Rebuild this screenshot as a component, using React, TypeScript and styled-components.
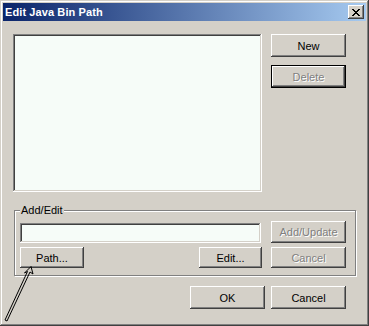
import React from "react";
import styled, { createGlobalStyle, css } from "styled-components";

const Global = createGlobalStyle`
  html, body { margin: 0; padding: 0; background: #d4d0c8; }
  body { font-family: "Liberation Sans", Arial, sans-serif; font-size: 11px; }
`;

const Window = styled.div`
  position: relative;
  box-sizing: border-box;
  width: 369px;
  height: 326px;
  background: #d4d0c8;
  padding: 3px;
  box-shadow: inset -1px -1px #404040, inset 1px 1px #d4d0c8,
    inset -2px -2px #808080, inset 2px 2px #ffffff;
  display: flex;
  flex-direction: column;
`;

const TitleBar = styled.div`
  height: 18px;
  display: flex;
  align-items: center;
  justify-content: space-between;
  padding-left: 2px;
  background: linear-gradient(to right, #0a246a, #a6caf0);
`;

const Title = styled.span`
  color: #ffffff;
  font-weight: bold;
  font-size: 11px;
  font-family: "Liberation Sans", Arial, sans-serif;
  letter-spacing: 0.1px;
`;

const bevel = css`
  box-shadow: inset -1px -1px #404040, inset 1px 1px #ffffff,
    inset -2px -2px #808080, inset 2px 2px #d4d0c8;
`;

const CloseButton = styled.div`
  width: 16px;
  height: 14px;
  margin-right: 2px;
  background: #d4d0c8;
  ${bevel};
  display: flex;
  align-items: center;
  justify-content: center;
`;

const Body = styled.div`
  flex: 1;
  display: flex;
  flex-direction: column;
  padding: 13px 0 0 10px;
`;

const TopRow = styled.div`
  display: flex;
  gap: 9px;
`;

const sunken = css`
  box-shadow: inset -1px -1px #ffffff, inset 1px 1px #808080,
    inset -2px -2px #d4d0c8, inset 2px 2px #404040;
`;

const ListBox = styled.div`
  width: 249px;
  height: 158px;
  background: #f6fcf8;
  ${sunken};
`;

const ButtonColumn = styled.div`
  display: flex;
  flex-direction: column;
  gap: 8px;
`;

const Button = styled.div<{ $w: number; $h: number; $disabled?: boolean; $default?: boolean }>`
  box-sizing: border-box;
  width: ${(p) => p.$w}px;
  height: ${(p) => p.$h}px;
  display: flex;
  align-items: center;
  justify-content: center;
  background: #d4d0c8;
  font-size: 11px;
  color: ${(p) => (p.$disabled ? "#808080" : "#000000")};
  text-shadow: ${(p) => (p.$disabled ? "1px 1px 0 #ffffff" : "none")};
  ${(p) =>
    p.$default
      ? css`
          box-shadow: inset 0 0 0 1px #000000, inset -2px -2px #404040,
            inset 2px 2px #ffffff, inset -3px -3px #808080,
            inset 3px 3px #d4d0c8;
        `
      : bevel};
`;

const Group = styled.div`
  position: relative;
  box-sizing: border-box;
  width: 342px;
  margin: 18px 0 0 1px;
  border: 1px solid #808080;
  box-shadow: inset 1px 1px #ffffff, 1px 1px #ffffff;
  padding: 10px 9px 7px 5px;
  display: flex;
  flex-direction: column;
  gap: 4px;
`;

const GroupLabel = styled.span`
  position: absolute;
  top: -8px;
  left: 5px;
  padding: 0 1px;
  background: #d4d0c8;
  line-height: 14px;
`;

const GroupRow = styled.div`
  display: flex;
  align-items: flex-start;
`;

const TextInput = styled.div`
  width: 241px;
  height: 20px;
  margin: 2px 10px 0 0;
  background: #f6fcf8;
  ${sunken};
`;

const Spacer = styled.div`
  flex: 1;
`;

const Footer = styled.div`
  display: flex;
  justify-content: flex-end;
  gap: 6px;
  margin: 10px 20px 0 0;
`;

const ArrowLayer = styled.svg`
  position: absolute;
  left: 0;
  top: 260px;
`;

const CloseGlyph = () => (
  <svg width="8" height="7" viewBox="0 0 8 7" shapeRendering="crispEdges">
    {[
      [0, 0], [1, 0], [6, 0], [7, 0],
      [1, 1], [2, 1], [5, 1], [6, 1],
      [2, 2], [3, 2], [4, 2], [5, 2],
      [3, 3], [4, 3],
      [2, 4], [3, 4], [4, 4], [5, 4],
      [1, 5], [2, 5], [5, 5], [6, 5],
      [0, 6], [1, 6], [6, 6], [7, 6],
    ].map(([x, y]) => (
      <rect key={`${x}-${y}`} x={x} y={y} width="1" height="1" fill="#000" />
    ))}
  </svg>
);

export default function App() {
  return (
    <>
      <Global />
      <Window>
        <TitleBar>
          <Title>Edit Java Bin Path</Title>
          <CloseButton>
            <CloseGlyph />
          </CloseButton>
        </TitleBar>
        <Body>
          <TopRow>
            <ListBox />
            <ButtonColumn>
              <Button $w={75} $h={23}>New</Button>
              <Button $w={75} $h={23} $disabled $default>Delete</Button>
            </ButtonColumn>
          </TopRow>
          <Group>
            <GroupLabel>Add/Edit</GroupLabel>
            <GroupRow>
              <TextInput />
              <Button $w={75} $h={22} $disabled>Add/Update</Button>
            </GroupRow>
            <GroupRow>
              <Button $w={64} $h={21}>Path...</Button>
              <Spacer />
              <Button $w={63} $h={21}>Edit...</Button>
              <Button $w={75} $h={21} $disabled style={{ marginLeft: 9 }}>Cancel</Button>
            </GroupRow>
          </Group>
          <Footer>
            <Button $w={75} $h={23}>OK</Button>
            <Button $w={75} $h={23}>Cancel</Button>
          </Footer>
        </Body>
        <ArrowLayer width="40" height="66" viewBox="0 0 40 66">
          <polygon
            points="31,6.5 33,14 30,12 7,61 5,60 27.5,11.5 24.5,13"
            fill="none"
            stroke="#000"
            strokeWidth="1"
          />
        </ArrowLayer>
      </Window>
    </>
  );
}
